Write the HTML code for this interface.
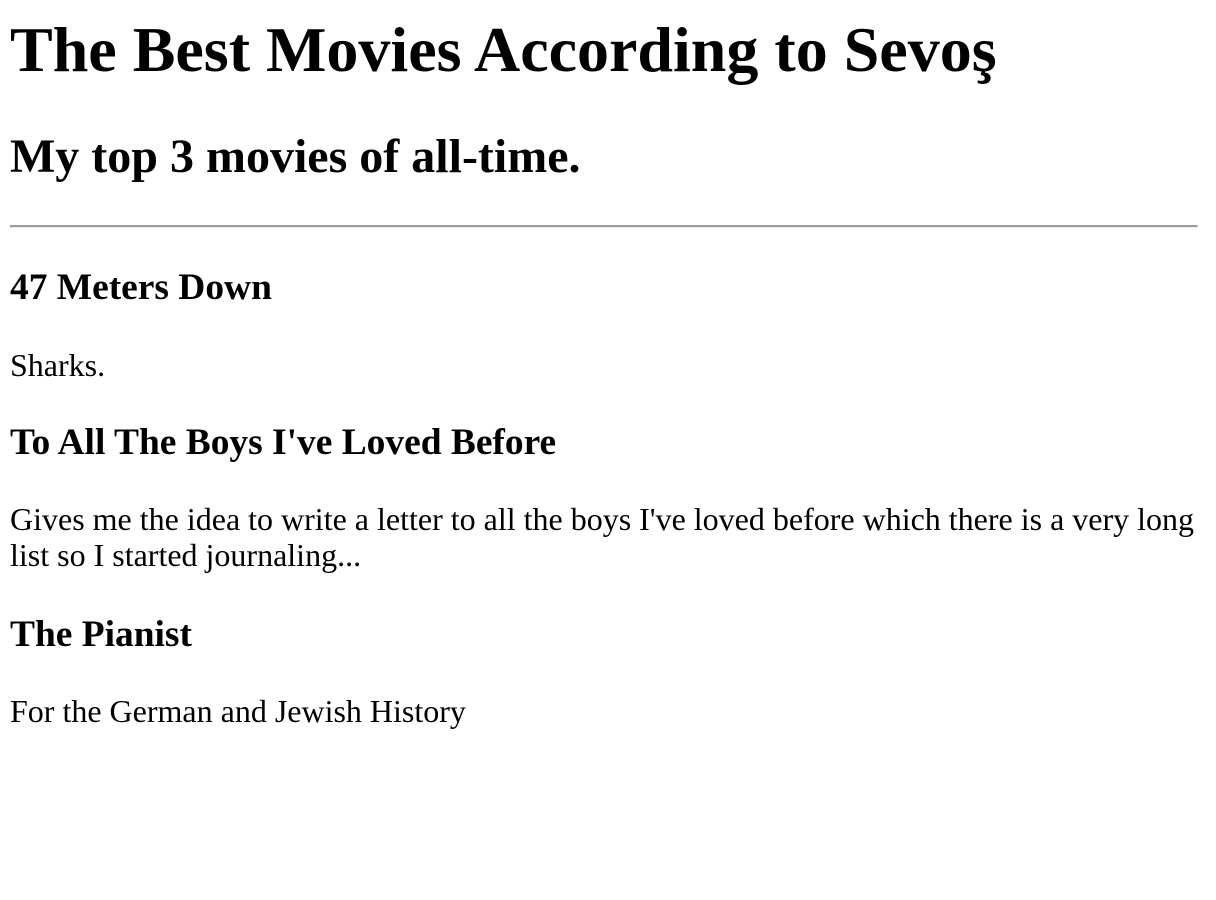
<!DOCTYPE html>
<html><head><meta charset="utf-8"><style>
html,body{margin:0;background:#fff;width:1216px;height:900px;overflow:hidden}
body{font-family:"Liberation Serif","Times New Roman",serif;color:#000;position:relative}
div{position:absolute;left:10px;white-space:nowrap}
.h1{font-size:64px;font-weight:bold;line-height:64px;top:18px}
.h2{font-size:48px;font-weight:bold;line-height:48px;top:133px}
.h3{font-size:37.44px;font-weight:bold;line-height:37.44px}
.p{font-size:32px;line-height:36px}
.hr{top:225px;left:10px;width:1186px;height:0;border-top:2px solid #9a9a9a;border-bottom:1px solid #eee;border-left:1px solid #9a9a9a;border-right:1px solid #eee}
</style></head><body>
<div class="h1">The Best Movies According to Sevoş</div>
<div class="h2">My top 3 movies of all-time.</div>
<div class="hr"></div>
<div class="h3" style="top:269px">47 Meters Down</div>
<div class="p" style="top:347px">Sharks.</div>
<div class="h3" style="top:424px">To All The Boys I've Loved Before</div>
<div class="p" style="top:501px">Gives me the idea to write a letter to all the boys I've loved before which there is a very long<br>list so I started journaling...</div>
<div class="h3" style="top:616px">The Pianist</div>
<div class="p" style="top:693px">For the German and Jewish History</div>
</body></html>
